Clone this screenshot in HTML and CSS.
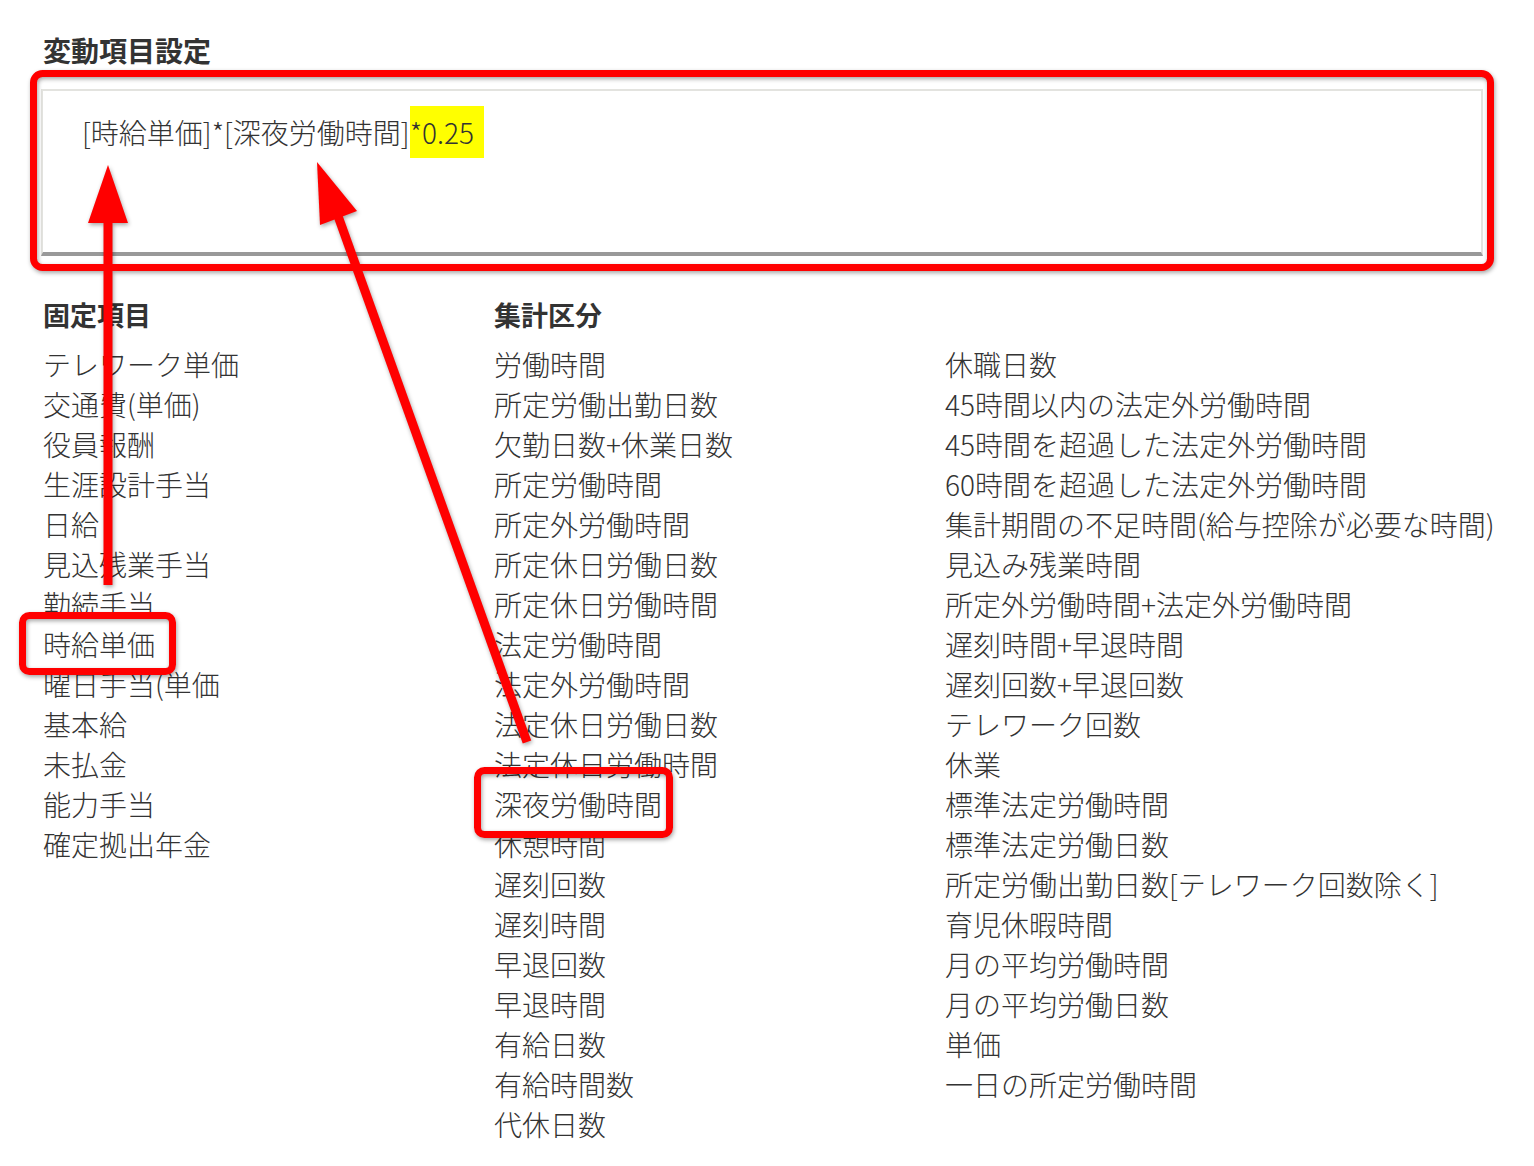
FILE: index.html
```html
<!DOCTYPE html>
<html lang="ja">
<head>
    <meta charset="UTF-8">
    <title>変動項目設定</title>
    <link rel="stylesheet" href="styles.css">
</head>
<body>
    <div class="page">
        <h2 class="title">変動項目設定</h2>
        <div class="formula">[時給単価]*[深夜労働時間]<span class="mark">*0.25</span></div>

        <div class="items">
            <h3 class="col-head">固定項目</h3>
            <h3 class="col-head wide">集計区分</h3>

            <ul class="list">
                <li>テレワーク単価</li>
                <li>交通費(単価)</li>
                <li>役員報酬</li>
                <li>生涯設計手当</li>
                <li>日給</li>
                <li>見込残業手当</li>
                <li>勤続手当</li>
                <li>時給単価</li>
                <li>曜日手当(単価</li>
                <li>基本給</li>
                <li>未払金</li>
                <li>能力手当</li>
                <li>確定拠出年金</li>
            </ul>
            <ul class="list">
                <li>労働時間</li>
                <li>所定労働出勤日数</li>
                <li>欠勤日数+休業日数</li>
                <li>所定労働時間</li>
                <li>所定外労働時間</li>
                <li>所定休日労働日数</li>
                <li>所定休日労働時間</li>
                <li>法定労働時間</li>
                <li>法定外労働時間</li>
                <li>法定休日労働日数</li>
                <li>法定休日労働時間</li>
                <li>深夜労働時間</li>
                <li>休憩時間</li>
                <li>遅刻回数</li>
                <li>遅刻時間</li>
                <li>早退回数</li>
                <li>早退時間</li>
                <li>有給日数</li>
                <li>有給時間数</li>
                <li>代休日数</li>
            </ul>
            <ul class="list">
                <li>休職日数</li>
                <li>45時間以内の法定外労働時間</li>
                <li>45時間を超過した法定外労働時間</li>
                <li>60時間を超過した法定外労働時間</li>
                <li>集計期間の不足時間(給与控除が必要な時間)</li>
                <li>見込み残業時間</li>
                <li>所定外労働時間+法定外労働時間</li>
                <li>遅刻時間+早退時間</li>
                <li>遅刻回数+早退回数</li>
                <li>テレワーク回数</li>
                <li>休業</li>
                <li>標準法定労働時間</li>
                <li>標準法定労働日数</li>
                <li>所定労働出勤日数[テレワーク回数除く]</li>
                <li>育児休暇時間</li>
                <li>月の平均労働時間</li>
                <li>月の平均労働日数</li>
                <li>単価</li>
                <li>一日の所定労働時間</li>
            </ul>
        </div>

        <!-- annotation layer: red boxes + arrows -->
        <svg class="notes" width="1534" height="1166" viewBox="0 0 1534 1166">
            <g class="marks">
                <rect x="33.5" y="73.5" width="1457" height="194" rx="9"/>
                <rect x="22.5" y="615.5" width="150" height="56" rx="7"/>
                <rect x="477.5" y="770.5" width="192" height="64" rx="7"/>
                <line x1="108" y1="585" x2="108" y2="215"/>
                <polygon points="108,165 88,223 128,223"/>
                <line x1="527" y1="742" x2="338" y2="216"/>
                <polygon points="317,162 320,225 357,211"/>
            </g>
        </svg>
    </div>
</body>
</html>
```

FILE: styles.css
```css
body {
    margin: 0;
    background: #fff;
    color: #333;
    font-family: "Noto Sans CJK JP", sans-serif;
}

.page {
    position: relative;
    width: 1534px;
    height: 1166px;
    padding: 31px 0 0 43px;
    box-sizing: border-box;
}

.title {
    margin: 0;
    font-size: 28px;
    font-weight: bold;
    line-height: 38px;
    color: #333;
}

.formula {
    margin: 20px 0 0 -2px;
    width: 1442px;
    height: 167px;
    box-sizing: border-box;
    padding: 15px 0 0 39px;
    border: 2px solid #e3e3df;
    border-bottom: 4px solid #999;
    font-size: 28px;
    font-weight: 300;
    line-height: 52px;
    color: #333;
}

.mark {
    display: inline-block;
    background: #ffff00;
    padding-right: 10px;
}

.items {
    display: grid;
    grid-template-columns: 451px 451px auto;
    margin-top: 41px;
}

.col-head {
    margin: 0;
    font-size: 27px;
    font-weight: bold;
    line-height: 36px;
    color: #333;
}

.col-head.wide {
    grid-column: 2 / 4;
}

.list {
    list-style: none;
    margin: 11px 0 0;
    padding: 0;
    font-size: 28px;
    font-weight: 300;
    line-height: 40px;
    white-space: nowrap;
}

.notes {
    position: absolute;
    top: 0;
    left: 0;
    pointer-events: none;
}

.marks {
    filter: drop-shadow(1px 2px 2px rgba(0, 0, 0, 0.35));
}

.marks rect {
    fill: none;
    stroke: #ff0000;
    stroke-width: 7;
}

.marks line {
    stroke: #ff0000;
    stroke-width: 9;
}

.marks polygon {
    fill: #ff0000;
}
```
